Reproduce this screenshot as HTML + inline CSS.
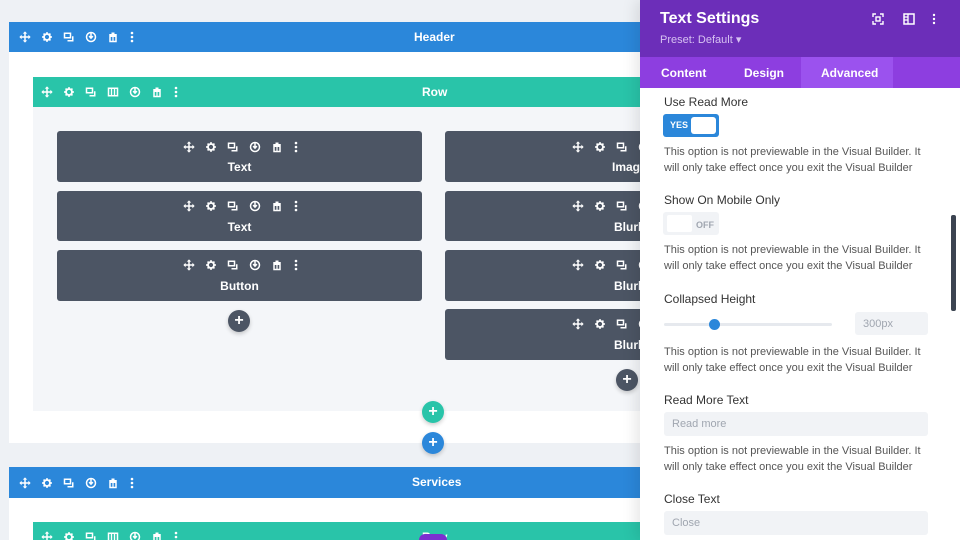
<!DOCTYPE html>
<html style="overflow:hidden"><head><meta charset="utf-8"><style>
*{margin:0;padding:0;box-sizing:border-box}
html,body{width:960px;height:540px;overflow:hidden}
body{background:#eef1f5;font-family:"Liberation Sans",sans-serif;position:relative}
.a{position:absolute}
.bar{position:absolute;color:#fff;font-size:12px;font-weight:bold;text-align:center}
.mod{position:absolute;background:#4c5564;border-radius:3px;color:#fff;font-size:12px;font-weight:bold;text-align:center}
.ic{position:absolute;display:flex;gap:10px}
.ic svg{width:12px;height:12px}
.ic svg.d{width:4px;height:12px;margin-left:1px}
.plus{position:absolute;width:22px;height:22px;border-radius:50%;color:#fff;font-size:16px;line-height:22px;text-align:center;font-weight:bold;box-shadow:0 2px 4px rgba(0,0,0,.2)}
.lbl{position:absolute;left:664px;font-size:12px;color:#333}
.note{position:absolute;left:664px;font-size:11px;line-height:15.5px;color:#555;width:266px}
.inp{position:absolute;background:#f1f3f6;border-radius:3px;color:#a0a6b0;font-size:11px;padding-left:8px;line-height:24px}
</style></head><body>
<svg width="0" height="0" style="position:absolute">
<defs>
<symbol id="mv" viewBox="0 0 16 16"><path d="M8 2v12M2 8h12" stroke="#fff" stroke-width="2"/><path d="M8 0.5l-3 3h6zM8 15.5l-3-3h6zM0.5 8l3-3v6zM15.5 8l-3-3v6z" fill="#fff"/></symbol>
<symbol id="gr" viewBox="0 0 16 16"><circle cx="8" cy="8" r="4" fill="none" stroke="#fff" stroke-width="2.4"/><path d="M8 1.5v3M8 11.5v3M1.5 8h3M11.5 8h3M3.4 3.4l2 2M10.6 10.6l2 2M3.4 12.6l2-2M10.6 5.4l2-2" stroke="#fff" stroke-width="2.2"/></symbol>
<symbol id="dp" viewBox="0 0 16 16"><rect x="2" y="3" width="8" height="6" fill="none" stroke="#fff" stroke-width="2"/><path d="M13 7v6H6" fill="none" stroke="#fff" stroke-width="2"/></symbol>
<symbol id="cl" viewBox="0 0 16 16"><rect x="2" y="3" width="12" height="10" fill="none" stroke="#fff" stroke-width="2"/><path d="M6 3v10M10 3v10" stroke="#fff" stroke-width="1.8"/></symbol>
<symbol id="sv" viewBox="0 0 16 16"><circle cx="8" cy="8" r="6" fill="none" stroke="#fff" stroke-width="2"/><path d="M8 2v7M5.5 6.8L8 9.5l2.5-2.7" fill="none" stroke="#fff" stroke-width="2"/></symbol>
<symbol id="tr" viewBox="0 0 16 16"><path d="M3 5h10M6 3h4" stroke="#fff" stroke-width="2"/><rect x="4" y="7" width="8" height="7" fill="none" stroke="#fff" stroke-width="2"/><path d="M8 7v7" stroke="#fff" stroke-width="1.6"/></symbol>
<symbol id="dt" viewBox="0 0 4 12"><circle cx="2" cy="2" r="1.3" fill="#fff"/><circle cx="2" cy="6" r="1.3" fill="#fff"/><circle cx="2" cy="10" r="1.3" fill="#fff"/></symbol>
</defs></svg>

<div class="a" style="left:9px;top:52px;width:640px;height:391px;background:#fff"></div>
<div class="bar" style="left:9px;top:22px;width:640px;height:30px;background:#2b87da;line-height:30px"><span style="position:absolute;left:405px">Header</span></div>
<div class="ic" style="left:19px;top:31px"><svg><use href="#mv"/></svg><svg><use href="#gr"/></svg><svg><use href="#dp"/></svg><svg><use href="#sv"/></svg><svg><use href="#tr"/></svg><svg class="d"><use href="#dt"/></svg></div>

<div class="a" style="left:33px;top:107px;width:620px;height:304px;background:#f4f6f9"></div>
<div class="bar" style="left:33px;top:77px;width:620px;height:30px;background:#29c4a9;line-height:30px"><span style="position:absolute;left:389px">Row</span></div>
<div class="ic" style="left:41px;top:86px"><svg><use href="#mv"/></svg><svg><use href="#gr"/></svg><svg><use href="#dp"/></svg><svg><use href="#cl"/></svg><svg><use href="#sv"/></svg><svg><use href="#tr"/></svg><svg class="d"><use href="#dt"/></svg></div>

<div class="mod" style="left:57px;top:131px;width:365px;height:51px"><span class="a" style="left:0;right:0;top:29px">Text</span></div>
<div class="mod" style="left:57px;top:191px;width:365px;height:50px"><span class="a" style="left:0;right:0;top:29px">Text</span></div>
<div class="mod" style="left:57px;top:250px;width:365px;height:51px"><span class="a" style="left:0;right:0;top:29px">Button</span></div>
<div class="ic" style="left:183px;top:141px"><svg><use href="#mv"/></svg><svg><use href="#gr"/></svg><svg><use href="#dp"/></svg><svg><use href="#sv"/></svg><svg><use href="#tr"/></svg><svg class="d"><use href="#dt"/></svg></div>
<div class="ic" style="left:183px;top:200px"><svg><use href="#mv"/></svg><svg><use href="#gr"/></svg><svg><use href="#dp"/></svg><svg><use href="#sv"/></svg><svg><use href="#tr"/></svg><svg class="d"><use href="#dt"/></svg></div>
<div class="ic" style="left:183px;top:259px"><svg><use href="#mv"/></svg><svg><use href="#gr"/></svg><svg><use href="#dp"/></svg><svg><use href="#sv"/></svg><svg><use href="#tr"/></svg><svg class="d"><use href="#dt"/></svg></div>
<div class="plus" style="left:228px;top:310px;background:#4c5564">+</div>

<div class="mod" style="left:445px;top:131px;width:365px;height:51px"><span class="a" style="left:167px;top:29px">Image</span></div>
<div class="mod" style="left:445px;top:191px;width:365px;height:50px"><span class="a" style="left:169px;top:29px">Blurb</span></div>
<div class="mod" style="left:445px;top:250px;width:365px;height:51px"><span class="a" style="left:169px;top:29px">Blurb</span></div>
<div class="mod" style="left:445px;top:309px;width:365px;height:51px"><span class="a" style="left:169px;top:29px">Blurb</span></div>
<div class="ic" style="left:572px;top:141px"><svg><use href="#mv"/></svg><svg><use href="#gr"/></svg><svg><use href="#dp"/></svg><svg><use href="#sv"/></svg></div>
<div class="ic" style="left:572px;top:200px"><svg><use href="#mv"/></svg><svg><use href="#gr"/></svg><svg><use href="#dp"/></svg><svg><use href="#sv"/></svg></div>
<div class="ic" style="left:572px;top:259px"><svg><use href="#mv"/></svg><svg><use href="#gr"/></svg><svg><use href="#dp"/></svg><svg><use href="#sv"/></svg></div>
<div class="ic" style="left:572px;top:318px"><svg><use href="#mv"/></svg><svg><use href="#gr"/></svg><svg><use href="#dp"/></svg><svg><use href="#sv"/></svg></div>
<div class="plus" style="left:616px;top:369px;background:#4c5564">+</div>

<div class="plus" style="left:422px;top:401px;background:#29c4a9">+</div>
<div class="plus" style="left:422px;top:432px;background:#2b87da">+</div>

<div class="a" style="left:9px;top:497px;width:640px;height:43px;background:#fff"></div>
<div class="bar" style="left:9px;top:467px;width:640px;height:31px;background:#2b87da;line-height:31px"><span style="position:absolute;left:403px">Services</span></div>
<div class="ic" style="left:19px;top:477px"><svg><use href="#mv"/></svg><svg><use href="#gr"/></svg><svg><use href="#dp"/></svg><svg><use href="#sv"/></svg><svg><use href="#tr"/></svg><svg class="d"><use href="#dt"/></svg></div>
<div class="bar" style="left:33px;top:522px;width:620px;height:18px;background:#29c4a9;line-height:30px;overflow:hidden"><span style="position:absolute;left:389px">Row</span></div>
<div class="a" style="left:419px;top:534px;width:28px;height:6px;border-radius:14px 14px 0 0;background:#7b2fd0"></div>
<div class="ic" style="left:41px;top:531px"><svg><use href="#mv"/></svg><svg><use href="#gr"/></svg><svg><use href="#dp"/></svg><svg><use href="#cl"/></svg><svg><use href="#sv"/></svg><svg><use href="#tr"/></svg><svg class="d"><use href="#dt"/></svg></div>

<div class="a" style="left:640px;top:0;width:320px;height:540px;background:#fff;box-shadow:-4px 0 14px rgba(0,0,0,.1)"></div>
<div class="a" style="left:640px;top:0;width:320px;height:57px;background:#6c2eb9"></div>
<div class="a" style="left:660px;top:10px;color:#fff;font-size:16px;font-weight:bold">Text Settings</div>
<div class="a" style="left:660px;top:33px;color:#d7c2f2;font-size:11px">Preset: Default ▾</div>
<svg class="a" style="left:872px;top:13px" width="12" height="12" viewBox="0 0 12 12"><path d="M1 4V1h3M8 1h3v3M11 8v3H8M4 11H1V8" fill="none" stroke="#fff" stroke-width="1.4"/><rect x="4" y="4" width="4" height="4" fill="none" stroke="#fff" stroke-width="1.4"/></svg>
<svg class="a" style="left:903px;top:13px" width="12" height="12" viewBox="0 0 12 12"><rect x="1" y="1" width="10" height="10" fill="none" stroke="#fff" stroke-width="1.5"/><path d="M5 1v10M1 4h4M1 7h4" stroke="#fff" stroke-width="1.3"/></svg>
<svg class="a" style="left:931px;top:13px" width="6" height="12" viewBox="0 0 6 12"><circle cx="3" cy="2" r="1.2" fill="#fff"/><circle cx="3" cy="6" r="1.2" fill="#fff"/><circle cx="3" cy="10" r="1.2" fill="#fff"/></svg>
<div class="a" style="left:640px;top:57px;width:320px;height:31px;background:#8d3ee0"></div>
<div class="a" style="left:801px;top:57px;width:92px;height:31px;background:#9b52ee"></div>
<div class="a" style="left:661px;top:66px;color:#fff;font-size:12px;font-weight:bold">Content</div>
<div class="a" style="left:744px;top:66px;color:#fff;font-size:12px;font-weight:bold">Design</div>
<div class="a" style="left:821px;top:66px;color:#fff;font-size:12px;font-weight:bold">Advanced</div>

<div class="lbl" style="top:95px">Use Read More</div>
<div class="a" style="left:663px;top:114px;width:56px;height:23px;background:#2b87da;border-radius:3px"></div>
<div class="a" style="left:670px;top:120px;color:#fff;font-size:9px;font-weight:bold">YES</div>
<div class="a" style="left:691px;top:117px;width:25px;height:17px;background:#fff;border-radius:3px"></div>
<div class="note" style="top:145px">This option is not previewable in the Visual Builder. It will only take effect once you exit the Visual Builder</div>

<div class="lbl" style="top:193px">Show On Mobile Only</div>
<div class="a" style="left:663px;top:212px;width:56px;height:23px;background:#f1f3f6;border-radius:3px"></div>
<div class="a" style="left:667px;top:215px;width:25px;height:17px;background:#fff;border-radius:2px"></div>
<div class="a" style="left:696px;top:220px;color:#a0a6b0;font-size:9px;font-weight:bold">OFF</div>
<div class="note" style="top:243px">This option is not previewable in the Visual Builder. It will only take effect once you exit the Visual Builder</div>

<div class="lbl" style="top:292px">Collapsed Height</div>
<div class="a" style="left:664px;top:323px;width:168px;height:3px;background:#e6e9ee;border-radius:2px"></div>
<div class="a" style="left:709px;top:319px;width:11px;height:11px;background:#2b87da;border-radius:50%"></div>
<div class="inp" style="left:855px;top:312px;width:73px;height:23px">300px</div>
<div class="note" style="top:345px">This option is not previewable in the Visual Builder. It will only take effect once you exit the Visual Builder</div>

<div class="lbl" style="top:393px">Read More Text</div>
<div class="inp" style="left:664px;top:412px;width:264px;height:24px">Read more</div>
<div class="note" style="top:444px">This option is not previewable in the Visual Builder. It will only take effect once you exit the Visual Builder</div>

<div class="lbl" style="top:492px">Close Text</div>
<div class="inp" style="left:664px;top:511px;width:264px;height:24px">Close</div>

<div class="a" style="left:951px;top:215px;width:5px;height:96px;background:#3c4451;border-radius:2px"></div>
</body></html>
